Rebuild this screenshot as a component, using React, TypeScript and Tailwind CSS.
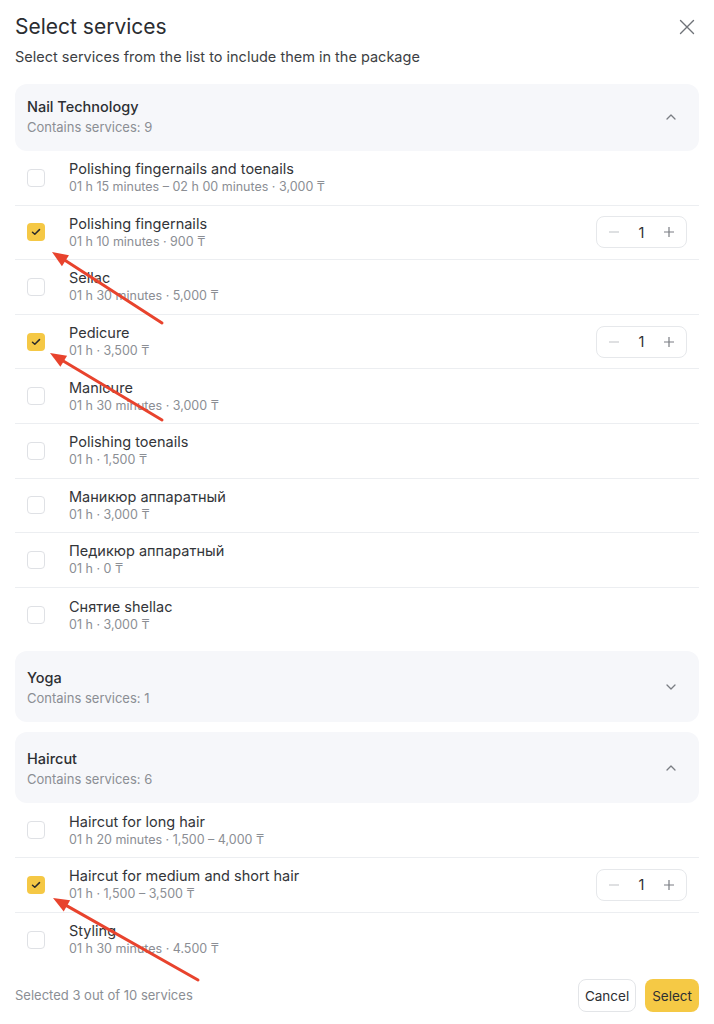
import React from "react";

type Service = { name: string; sub: string; checked?: boolean };

const nail: Service[] = [
  { name: "Polishing fingernails and toenails", sub: "01 h 15 minutes – 02 h 00 minutes · 3,000 ₸" },
  { name: "Polishing fingernails", sub: "01 h 10 minutes · 900 ₸", checked: true },
  { name: "Sellac", sub: "01 h 30 minutes · 5,000 ₸" },
  { name: "Pedicure", sub: "01 h · 3,500 ₸", checked: true },
  { name: "Manicure", sub: "01 h 30 minutes · 3,000 ₸" },
  { name: "Polishing toenails", sub: "01 h · 1,500 ₸" },
  { name: "Маникюр аппаратный", sub: "01 h · 3,000 ₸" },
  { name: "Педикюр аппаратный", sub: "01 h · 0 ₸" },
  { name: "Снятие shellac", sub: "01 h · 3,000 ₸" },
];

const hair: Service[] = [
  { name: "Haircut for long hair", sub: "01 h 20 minutes · 1,500 – 4,000 ₸" },
  { name: "Haircut for medium and short hair", sub: "01 h · 1,500 – 3,500 ₸", checked: true },
  { name: "Styling", sub: "01 h 30 minutes · 4.500 ₸" },
];

function Chevron({ up }: { up: boolean }) {
  return (
    <svg width="12" height="8" viewBox="0 0 12 8" fill="none">
      {up ? (
        <path d="M2 6 L6 2 L10 6" stroke="#7a7d83" strokeWidth="1.3" strokeLinecap="round" strokeLinejoin="round" />
      ) : (
        <path d="M2 2 L6 6 L10 2" stroke="#7a7d83" strokeWidth="1.3" strokeLinecap="round" strokeLinejoin="round" />
      )}
    </svg>
  );
}

function GroupCard({ title, count, up, tight }: { title: string; count: number; up: boolean; tight?: boolean }) {
  return (
    <div
      className={`flex items-center justify-between rounded-[12px] bg-[#f6f7fa] pl-[12px] pr-[22px] ${
        tight ? "h-[67px] pb-[2px]" : "h-[71px] pt-[1px]"
      }`}
    >
      <div className="flex flex-col">
        <span className="text-[14.5px] leading-[20px] font-medium text-[#2d2f33]">{title}</span>
        <span className="mt-[1px] text-[13px] leading-[18px] text-[#8b8e94]">Contains services: {count}</span>
      </div>
      <Chevron up={up} />
    </div>
  );
}

function Checkbox({ checked }: { checked?: boolean }) {
  return checked ? (
    <div className="flex h-[18px] w-[18px] items-center justify-center rounded-[4px] bg-[#f5c845]">
      <svg width="10" height="8" viewBox="0 0 10 8" fill="none">
        <path d="M1.5 4.2 L3.8 6.3 L8.5 1.6" stroke="#2b2b2b" strokeWidth="1.5" strokeLinecap="round" strokeLinejoin="round" />
      </svg>
    </div>
  ) : (
    <div className="h-[18px] w-[18px] rounded-[4px] border border-[#dfe1e5] bg-white" />
  );
}

function Stepper() {
  return (
    <div className="flex h-[32px] w-[91px] items-center justify-between rounded-[8px] border border-[#e6e8eb] px-[11px]">
      <svg width="12" height="12" viewBox="0 0 12 12">
        <path d="M1 6 H11" stroke="#c9cbcf" strokeWidth="1.2" />
      </svg>
      <span className="text-[14.5px] text-[#2d2f33]">1</span>
      <svg width="12" height="12" viewBox="0 0 12 12">
        <path d="M1 6 H11 M6 1 V11" stroke="#7a7d83" strokeWidth="1.2" />
      </svg>
    </div>
  );
}

function Row({ s, last }: { s: Service; last?: boolean }) {
  return (
    <div
      className={`flex h-[54.6px] items-center pl-[12px] pr-[12px] ${last ? "" : "border-b border-[#eceef1]"}`}
    >
      <Checkbox checked={s.checked} />
      <div className="ml-[24px] flex flex-1 flex-col pt-[1px]">
        <span className="text-[14.5px] leading-[18px] text-[#333539]">{s.name}</span>
        <span className="text-[12.5px] leading-[18px] text-[#8b8e94]">{s.sub}</span>
      </div>
      {s.checked && <Stepper />}
    </div>
  );
}

function Arrow({ x1, y1, x2, y2 }: { x1: number; y1: number; x2: number; y2: number }) {
  const dx = x2 - x1;
  const dy = y2 - y1;
  const len = Math.sqrt(dx * dx + dy * dy);
  const ux = dx / len;
  const uy = dy / len;
  const hl = 16;
  const hw = 6.5;
  const bx = x2 - ux * hl;
  const by = y2 - uy * hl;
  const p1 = `${bx - uy * hw},${by + ux * hw}`;
  const p2 = `${bx + uy * hw},${by - ux * hw}`;
  return (
    <g>
      <line x1={x1} y1={y1} x2={bx + ux * 2} y2={by + uy * 2} stroke="#e8432d" strokeWidth="3" strokeLinecap="round" />
      <polygon points={`${x2},${y2} ${p1} ${p2}`} fill="#e8432d" />
    </g>
  );
}

export default function App() {
  return (
    <div
      className="relative h-[1024px] w-[714px] overflow-hidden bg-white"
      style={{ fontFamily: "Inter, 'Noto Sans', sans-serif" }}
    >
      <div className="flex flex-col px-[15px]">
        <div className="flex h-[40px] items-center justify-between pt-[14px]">
          <span className="text-[21px] leading-[26px] font-normal text-[#2b2d31]">Select services</span>
          <svg width="16" height="16" viewBox="0 0 16 16" className="mr-[4px]">
            <path d="M1.5 1.5 L14.5 14.5 M14.5 1.5 L1.5 14.5" stroke="#6f7278" strokeWidth="1.4" strokeLinecap="round" />
          </svg>
        </div>
        <p className="mt-[7px] text-[14.5px] leading-[20px] text-[#3d3f44]">
          Select services from the list to include them in the package
        </p>

        <div className="mt-[17px]">
          <GroupCard title="Nail Technology" count={9} up tight />
        </div>
        <div className="flex flex-col">
          {nail.map((s, i) => (
            <Row key={s.name} s={s} last={i === nail.length - 1} />
          ))}
        </div>

        <div className="mt-[9px]">
          <GroupCard title="Yoga" count={1} up={false} />
        </div>
        <div className="mt-[10px]">
          <GroupCard title="Haircut" count={6} up />
        </div>
        <div className="flex flex-col">
          {hair.map((s, i) => (
            <Row key={s.name} s={s} last={i === hair.length - 1} />
          ))}
        </div>

        <div className="mt-[12px] flex items-center justify-between">
          <span className="text-[13px] text-[#8b8e94]">Selected 3 out of 10 services</span>
          <div className="flex items-center gap-[9px]">
            <button className="h-[33px] rounded-[8px] border border-[#e3e5e8] bg-white px-[6px] text-[13.5px] text-[#2d2f33]">
              Cancel
            </button>
            <button className="h-[33px] rounded-[8px] bg-[#f5c945] px-[7px] text-[13.5px] text-[#2d2f33]">
              Select
            </button>
          </div>
        </div>
      </div>

      <svg className="pointer-events-none absolute left-0 top-0" width="714" height="1024">
        <Arrow x1={162} y1={323} x2={52} y2={252} />
        <Arrow x1={162} y1={420} x2={50} y2={353} />
        <Arrow x1={198} y1={980} x2={53} y2={898} />
      </svg>
    </div>
  );
}
